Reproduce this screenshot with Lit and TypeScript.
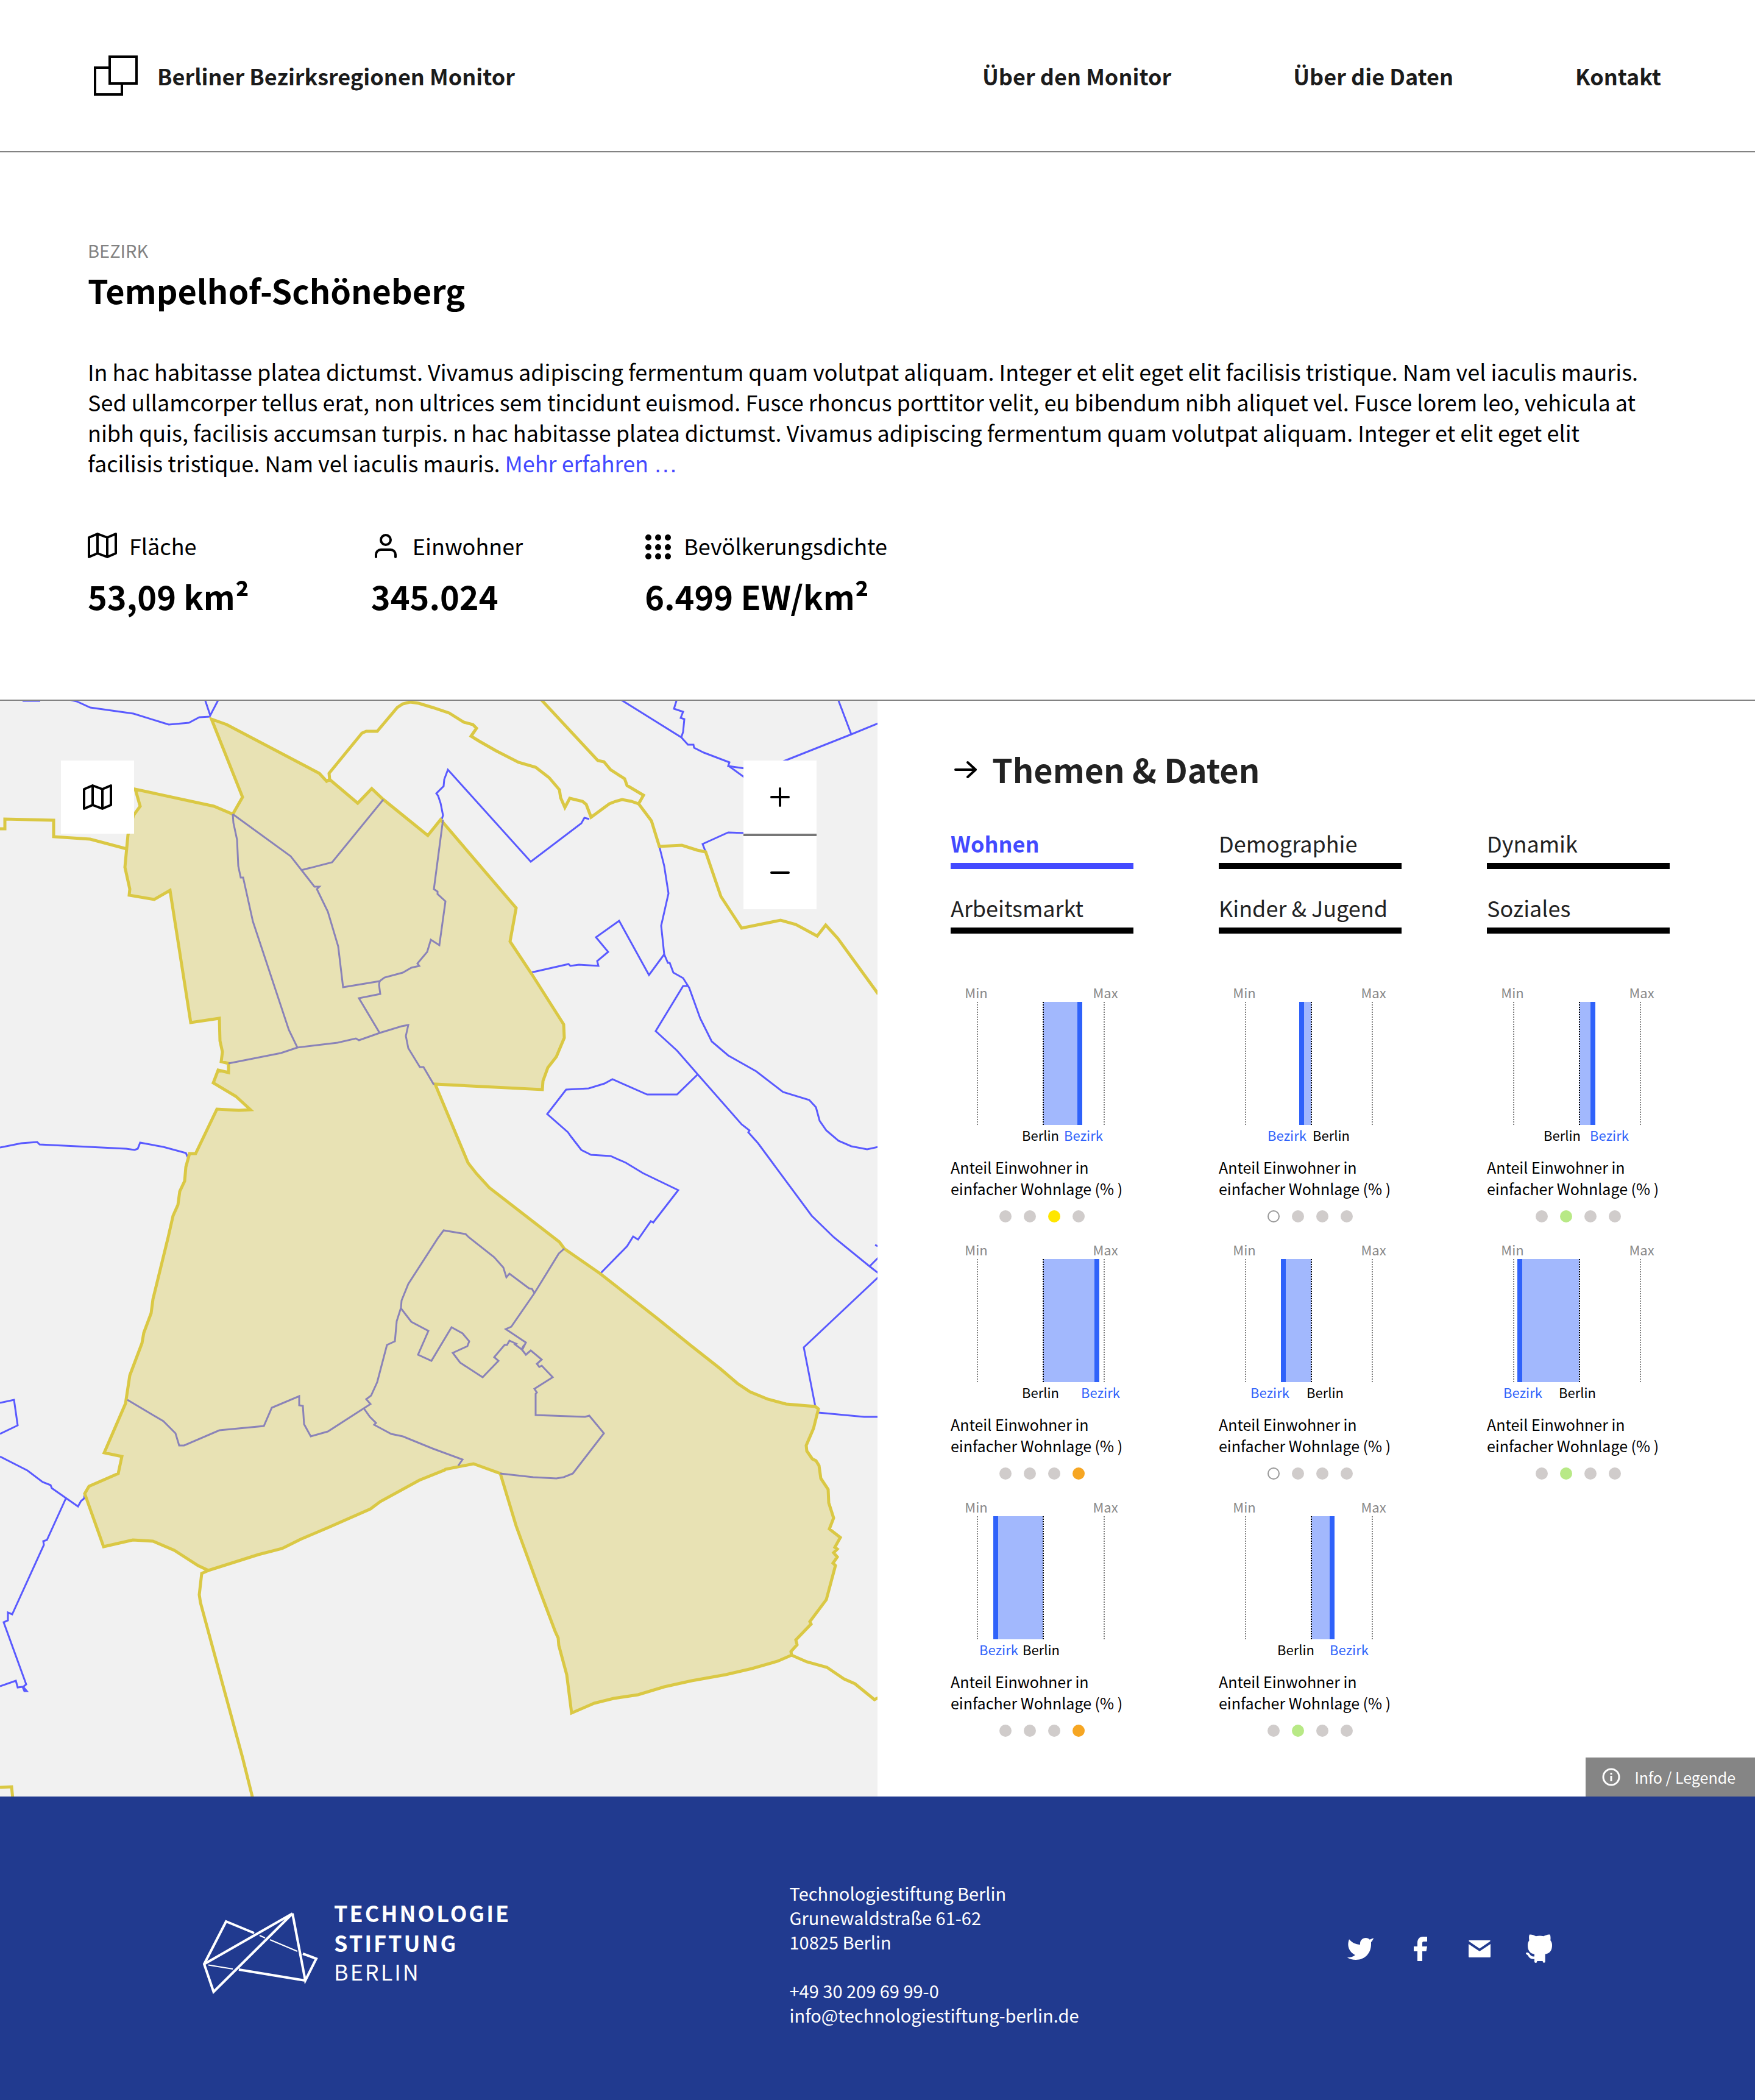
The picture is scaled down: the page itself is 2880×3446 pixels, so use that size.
import { LitElement, html, css, svg } from "lit";
import { customElement, property, state } from "lit/decorators.js";
import { classMap } from "lit/directives/class-map.js";

/* ---------- map geometry ---------- */

// The district borders were digitised on four sheets; each sheet has its own
// origin and resolution and is projected onto one shared drawing plane.
type Sheet = "nw" | "ne" | "sw" | "se";
const SHEETS: Record<Sheet, { x: number; y: number; sx: number; sy: number }> = {
  nw: { x: 0, y: -10, sx: 2.148, sy: 1.742 },
  ne: { x: 710, y: -10, sx: 2.119, sy: 1.742 },
  sw: { x: 0, y: 880, sx: 2.148, sy: 1.686 },
  se: { x: 710, y: 880, sx: 2.119, sy: 1.686 },
};

const project = (sheet: Sheet, points: string): string =>
  points
    .split(" ")
    .map((pair) => {
      const [x, y] = pair.split(",").map(Number);
      const s = SHEETS[sheet];
      return `${Math.round(s.x + x / s.sx)},${Math.round(s.y + y / s.sy)}`;
    })
    .join(" ");

const line = (...parts: [Sheet, string][]): string =>
  parts.map(([sheet, points]) => project(sheet, points)).join(" ");

const DISTRICT = line(
  ["nw", "745,70 800,86 1125,224 1152,248 1162,243 1260,310 1310,268 1350,298 1508,402 1552,357"],
  ["ne", "290,610 270,705 345,800 455,942 458,980 430,1035 400,1066 384,1104 382,1128 8,1114 122,1338 130,1344 152,1370 198,1410 440,1564"],
  ["se", "458,32 582,102 780,225 900,302 1000,364 1060,404 1105,428 1165,448 1230,462 1330,468 1342,476 1325,530 1298,577 1302,592 1320,614 1332,619 1343,632 1349,667 1376,698 1378,735 1394,778 1380,808 1418,831 1398,858 1406,864 1394,873 1406,885 1392,902 1400,909 1368,1004 1312,1064 1316,1071 1262,1114 1268,1128 1245,1146 1248,1157 1200,1173 1110,1193 1020,1210 900,1228 805,1245 715,1267 630,1276 562,1290 484,1316 466,1210 438,1130 437,1110 425,1090 370,975 290,800 236,655 142,627 45,643"],
  ["sw", "1568,644 1478,672 1340,732 1305,752 1160,803 1060,837 995,861 910,879 735,922 698,908 615,866 540,841 468,838 365,856 299,710 314,690 416,655 430,607 367,597 442,460 457,382 501,294 507,265 532,211 539,172 593,0"],
  ["nw", "610,1490 628,1458 634,1420 650,1390 655,1350 668,1312 690,1312 765,1184 842,1188 882,1186 832,1148 752,1109 768,1073 806,1080 806,1054 780,1048 785,1020 775,990 773,925 672,937 600,559 543,586 455,573 457,555 441,493 452,400 470,345 494,318 476,270 755,318 820,342 855,292"]
);

const DISTRICT_LINES: string[] = [
  line(["nw", "0,384 18,384 18,355 190,358 190,406 318,412 446,441"]),
  line(
    ["nw", "1162,243 1160,225 1275,110 1290,104 1330,104 1400,36 1420,26 1445,21 1475,24 1525,36"],
    ["ne", "57,52 108,78 140,86 153,96 134,118 160,132 220,160 298,194 358,208 405,237 440,271 446,295 460,322 476,297 522,304 534,314 550,350 615,312 635,304 660,300 690,305 716,312 733,288 675,260 668,241 618,214 595,192 575,189 378,14"]
  ),
  line(["ne", "716,312 760,360 788,434 866,430 920,445 950,450 1002,576 1075,667 1210,645 1262,656 1338,690 1366,659 1410,697 1550,855"]),
  line(["sw", "735,922 711,931 702,990 706,1012 855,1440 892,1554"]),
  line(["sw", "0,1523 41,1520 45,1554"]),
  line(["se", "1248,1157 1302,1175 1370,1190 1430,1222 1468,1235 1536,1279 1550,1274"]),
];

const REGION_LINES: string[] = [
  line(["nw", "80,18 142,18"]),
  line(["nw", "235,12 270,20 318,36 470,54 595,85 665,80 702,65 742,63"]),
  line(["nw", "722,12 742,60 772,12"]),
  line(["nw", "0,1295 75,1282 132,1279 140,1286 445,1297 475,1301 486,1298 495,1281 575,1292 655,1310 661,1322"]),
  line(["ne", "32,356 36,345 28,310 20,290 12,283 38,262 40,242 53,214 341,478 518,367 527,352 545,355"]),
  line(["ne", "788,434 806,490 819,568 795,660 805,742 752,801 648,646 568,694 611,735 572,762 576,776 508,771 478,776 472,770 341,794"]),
  line(["ne", "805,742 818,766 824,766 838,794 870,810 892,838 930,925 970,991 1028,1031 1125,1077 1218,1135 1310,1158 1332,1180 1345,1218 1368,1246 1412,1275 1455,1290 1510,1299 1550,1292"]),
  line(
    ["ne", "887,833 870,833 775,962 850,1018 921,1086 1075,1228 1102,1245 1097,1250 1132,1282 1318,1489"],
    ["se", "1394,0 1520,81 1550,100"]
  ),
  line(["se", "1520,81 1550,58"]),
  line(["se", "1538,22 1550,25"]),
  line(
    ["ne", "921,1086 850,1142 745,1142 625,1099 598,1112 542,1125 465,1128 398,1198 470,1250 480,1263 518,1301 550,1315 618,1319 672,1337 730,1368 854,1417 768,1508 759,1505 715,1558 698,1549"],
    ["se", "675,25 582,102"]
  ),
  line(["ne", "650,12 864,122 888,143 907,142 908,151 942,165 1032,193 1028,203 1100,213"]),
  line(["ne", "1030,203 1100,245"]),
  line(["ne", "864,122 870,106 875,70 862,66 870,48 840,40 850,12"]),
  line(["ne", "1410,12 1455,113"]),
  line(["ne", "1200,196 1455,113 1550,82"]),
  line(["ne", "950,450 938,427 1028,394 1150,398"]),
  line(["sw", "0,458 49,450 62,521 0,545"]),
  line(["sw", "0,607 97,645 150,678 178,687 182,694 275,745 285,730 297,723 299,710"]),
  line(["sw", "232,723 165,838 153,842 154,852 42,1044 28,1038 28,1060 12,1065 92,1238 82,1244 95,1256 86,1256 80,1244 63,1246 56,1227 0,1242"]),
  line(["se", "1550,112 1290,306 1330,468"]),
  line(["se", "1342,485 1500,497 1550,498"]),
];

const INNER_LINES: string[] = [
  line(
    ["nw", "820,342 1025,462 1108,549 1126,548 1118,556 1155,620 1192,720 1209,837 1338,818 1355,808 1420,794 1450,780 1478,775 1472,768 1505,735 1518,701 1548,716"],
    ["ne", "44,590 18,570 18,562 5,555 36,357"]
  ),
  line(["nw", "820,342 822,365 835,415 840,490 848,523 858,523 892,648 1018,958 1048,1009 1190,995 1255,983 1265,987 1338,966 1415,947 1440,945 1431,975 1440,1010 1480,1065 1493,1064 1530,1115"]),
  line(["nw", "805,1054 990,1025 1048,1009"]),
  line(["nw", "1338,966 1265,867 1341,856 1336,830 1338,818"]),
  line(["nw", "1062,501 1170,479 1352,300"]),
  line(
    ["sw", "449,451 575,509 618,543 632,576 648,577 773,535 930,522 957,472 1054,440 1055,466 1067,467 1072,517 1096,552 1155,538 1283,474 1306,462 1292,448 1308,438 1330,402 1363,298 1391,288 1398,232 1414,195 1416,176 1440,130 1545,2"],
    ["ne", "38,1532 115,1542"],
    ["se", "125,0 215,55 245,85 256,111 268,101 335,142 345,144 354,155"]
  ),
  line(
    ["sw", "1283,474 1303,498 1325,515 1318,520 1380,545 1420,552"],
    ["se", "0,585 103,616 90,632"]
  ),
  line(
    ["sw", "1414,198 1450,234 1511,260 1474,325 1521,342"],
    ["se", "65,249 103,266 127,289 121,301 70,321 95,348 174,388 228,342 213,332 250,299 258,299 268,287 291,295 286,297 312,312 325,292 254,255 273,248 354,155 438,46 458,32"]
  ),
  line(["se", "318,298 310,310 325,325 341,314 379,339 362,350 371,359 380,355 417,388 353,420 362,430 358,433 358,492 530,498 545,494 596,543 488,655 455,665 430,667 350,664 236,655"]),
];

/* ---------- icons ---------- */

const mapIcon = html`<svg class="icon" viewBox="0 0 48 48" aria-hidden="true">
  <path class="stroke" d="M2 11 16 5 32 11 46 5V37L32 43 16 37 2 43ZM16 5V37M32 11V43" />
</svg>`;

const personIcon = html`<svg class="icon" viewBox="0 0 48 48" aria-hidden="true">
  <circle class="stroke" cx="24" cy="15" r="8" />
  <path class="stroke" d="M8 43V39A8 8 0 0 1 16 31H32A8 8 0 0 1 40 39V43" />
</svg>`;

const gridIcon = html`<svg class="icon narrow" viewBox="0 0 44 48" aria-hidden="true">
  ${[11, 27, 42].map((y) => [6, 22, 38].map((x) => svg`<circle cx=${x} cy=${y} r="5" />`))}
</svg>`;

/* ---------- data ---------- */

interface Indicator {
  bezirk: number;
  bezirkLabel: number;
  berlinLabel: number;
  rating: number;
}

const BERLIN = 152;
const RATINGS = ["none", "green", "yellow", "orange"];

const INDICATORS: Indicator[] = [
  { bezirk: 212, berlinLabel: 117, bezirkLabel: 186, rating: 2 },
  { bezirk: 136, berlinLabel: 154, bezirkLabel: 80, rating: 0 },
  { bezirk: 174, berlinLabel: 93, bezirkLabel: 169, rating: 1 },
  { bezirk: 240, berlinLabel: 117, bezirkLabel: 214, rating: 3 },
  { bezirk: 106, berlinLabel: 144, bezirkLabel: 52, rating: 0 },
  { bezirk: 54, berlinLabel: 118, bezirkLabel: 27, rating: 1 },
  { bezirk: 74, berlinLabel: 118, bezirkLabel: 47, rating: 3 },
  { bezirk: 186, berlinLabel: 96, bezirkLabel: 182, rating: 1 },
];

const TOPICS = ["Wohnen", "Demographie", "Dynamik", "Arbeitsmarkt", "Kinder & Jugend", "Soziales"];

/* ---------- elements ---------- */

@customElement("indicator-card")
class IndicatorCard extends LitElement {
  @property({ attribute: false }) data!: Indicator;

  static styles = css`
    :host {
      display: block;
    }
    .chart {
      display: block;
      width: 300px;
      height: 264px;
      overflow: visible;
      font-size: 22px;
    }
    .limit {
      stroke: #808080;
      stroke-width: 2;
      stroke-dasharray: 2 2;
    }
    .mean {
      stroke: #000;
      stroke-width: 2;
      stroke-dasharray: 2 2;
    }
    .range {
      fill: #a2b8fd;
    }
    .value {
      fill: #2f62fa;
    }
    .muted {
      fill: #888;
      text-anchor: middle;
    }
    .caption {
      margin: 18px 0;
      font-size: 25px;
      line-height: 35px;
      color: #000;
    }
    .dots {
      display: flex;
      justify-content: center;
      gap: 20px;
      width: 300px;
      margin: 0;
      padding: 0;
      list-style: none;
    }
    .dot {
      box-sizing: border-box;
      width: 20px;
      height: 20px;
      border-radius: 50%;
      background: #d0cccb;
    }
    .none {
      background: #fff;
      border: 2px solid #999;
    }
    .green {
      background: #b8e986;
    }
    .yellow {
      background: #ffe600;
    }
    .orange {
      background: #f6a623;
    }
  `;

  render() {
    const { bezirk, bezirkLabel, berlinLabel, rating } = this.data;
    return html`
      <svg class="chart" viewBox="0 0 300 264">
        <text class="muted" x="42" y="22">Min</text>
        <text class="muted" x="254" y="22">Max</text>
        <line class="limit" x1="44" x2="44" y1="28" y2="230" />
        <line class="limit" x1="252" x2="252" y1="28" y2="230" />
        <rect class="range" x=${Math.min(bezirk, BERLIN)} y="28" width=${Math.abs(bezirk - BERLIN)} height="202" />
        <line class="mean" x1=${BERLIN} x2=${BERLIN} y1="28" y2="230" />
        <rect class="value" x=${bezirk - 4} y="28" width="8" height="202" />
        <text x=${berlinLabel} y="256">Berlin</text>
        <text class="value" x=${bezirkLabel} y="256">Bezirk</text>
      </svg>
      <p class="caption">Anteil Einwohner in<br />einfacher Wohnlage (% )</p>
      <ul class="dots">
        ${RATINGS.map((name, i) => html`<li class=${classMap({ dot: true, [name]: i === rating })}></li>`)}
      </ul>
    `;
  }
}

@customElement("district-map")
class DistrictMap extends LitElement {
  static styles = css`
    :host {
      display: block;
      position: relative;
      background: #f1f1f1;
    }
    .map {
      display: block;
      width: 100%;
      height: auto;
    }
    .map polyline,
    .map polygon {
      fill: none;
      stroke-linejoin: miter;
    }
    .map .area {
      fill: #e8e2b4;
      stroke: #dac844;
      stroke-width: 5;
    }
    .map .district {
      stroke: #dac844;
      stroke-width: 5;
    }
    .map .region {
      stroke: #5a5aff;
      stroke-width: 3;
    }
    .map .inner {
      stroke: #8a83b8;
      stroke-width: 3;
    }
    .button {
      display: flex;
      align-items: center;
      justify-content: center;
      width: 120px;
      height: 120px;
      padding: 0;
      border: 0;
      background: #fff;
      cursor: pointer;
    }
    .layers {
      position: absolute;
      top: 98px;
      left: 100px;
    }
    .zoom {
      position: absolute;
      top: 98px;
      right: 100px;
      display: flex;
      flex-direction: column;
      gap: 4px;
      background: #777;
    }
    .icon {
      width: 48px;
      height: 48px;
    }
    .stroke {
      fill: none;
      stroke: #000;
      stroke-width: 4;
      stroke-linecap: round;
      stroke-linejoin: round;
    }
  `;

  render() {
    return html`
      <svg class="map" viewBox="0 0 1440 1798" role="img" aria-label="Karte Tempelhof-Schöneberg">
        ${REGION_LINES.map((p) => svg`<polyline class="region" points=${p} />`)}
        <polygon class="area" points=${DISTRICT} />
        ${INNER_LINES.map((p) => svg`<polyline class="inner" points=${p} />`)}
        ${DISTRICT_LINES.map((p) => svg`<polyline class="district" points=${p} />`)}
      </svg>
      <button class="button layers" type="button" aria-label="Karte">${mapIcon}</button>
      <div class="zoom">
        <button class="button" type="button" aria-label="Vergrößern">
          <svg class="icon" viewBox="0 0 48 48"><path class="stroke" d="M10 24H38M24 10V38" /></svg>
        </button>
        <button class="button" type="button" aria-label="Verkleinern">
          <svg class="icon" viewBox="0 0 48 48"><path class="stroke" d="M10 24H38" /></svg>
        </button>
      </div>
    `;
  }
}

@customElement("app-root")
class AppRoot extends LitElement {
  @state() private topic = "Wohnen";

  static styles = css`
    :host {
      display: block;
      background: #fff;
      color: #000;
      font-family: "Noto Sans CJK SC", sans-serif;
      font-size: 36px;
      line-height: 50px;
    }
    a {
      color: inherit;
      text-decoration: none;
    }
    h1,
    h2,
    p,
    dl,
    dd {
      margin: 0;
    }
    .stroke {
      fill: none;
      stroke: #000;
      stroke-width: 4;
      stroke-linecap: round;
      stroke-linejoin: round;
    }
    .icon {
      flex: none;
      width: 48px;
      height: 48px;
    }
    .narrow {
      width: 44px;
    }

    .header {
      display: flex;
      align-items: center;
      justify-content: space-between;
      height: 248px;
      padding: 0 154px;
      border-bottom: 2px solid #828282;
      color: #1b1b1b;
      font-weight: 700;
    }
    .brand {
      display: flex;
      align-items: center;
      gap: 30px;
    }
    .brand-mark {
      width: 74px;
      height: 66px;
    }
    .nav {
      display: flex;
      gap: 200px;
    }

    .intro {
      padding: 140px 144px 134px;
      border-bottom: 2px solid #828282;
    }
    .kicker {
      font-size: 29px;
      line-height: 40px;
      color: #828282;
    }
    .title {
      margin: 10px 0 72px;
      font-size: 54px;
      line-height: 72px;
      font-weight: 700;
    }
    .lead {
      padding-right: 32px;
    }
    .more {
      color: #434aff;
    }
    .ellipsis {
      font-family: "Liberation Sans", sans-serif;
      font-size: 40px;
      line-height: 1;
    }
    .facts {
      display: flex;
      gap: 200px;
      margin-top: 86px;
    }
    .fact-label {
      display: flex;
      align-items: center;
      gap: 20px;
    }
    .fact-value {
      margin-top: 22px;
      font-size: 54px;
      line-height: 72px;
      font-weight: 700;
    }

    .main {
      display: grid;
      grid-template-columns: 1fr 1fr;
    }
    .panel {
      display: flex;
      flex-direction: column;
      padding-top: 76px;
    }
    .panel-title {
      display: flex;
      align-items: center;
      gap: 20px;
      padding: 0 120px;
      font-size: 54px;
      line-height: 72px;
      font-weight: 700;
      color: #222;
    }
    .tabs,
    .charts {
      display: grid;
      grid-template-columns: repeat(3, 1fr);
      column-gap: 140px;
      padding: 0 140px 0 120px;
    }
    .tabs {
      row-gap: 38px;
      margin-top: 60px;
    }
    .tab {
      padding: 0 0 8px;
      border: 0;
      border-bottom: 10px solid #000;
      background: none;
      font: inherit;
      color: #222;
      text-align: left;
      white-space: nowrap;
      cursor: pointer;
    }
    .active {
      border-color: #434aff;
      color: #434aff;
      font-weight: 700;
    }
    .charts {
      row-gap: 32px;
      margin-top: 84px;
    }
    .legend {
      display: flex;
      align-items: center;
      align-self: flex-end;
      gap: 22px;
      height: 64px;
      margin-top: auto;
      padding: 0 32px 0 26px;
      border: 0;
      background: #858585;
      color: #fff;
      font: inherit;
      font-size: 25px;
      line-height: 35px;
      cursor: pointer;
    }
    .legend-icon {
      width: 32px;
      height: 32px;
    }
    .legend-icon circle,
    .legend-icon path {
      fill: none;
      stroke: #fff;
      stroke-width: 3;
    }

    .footer {
      display: flex;
      align-items: center;
      justify-content: space-between;
      padding: 138px 330px 120px;
      background: #213a8f;
      color: #fff;
      font-size: 29px;
      line-height: 40px;
    }
    .logo {
      width: 528px;
      height: 160px;
      overflow: visible;
      fill: #fff;
      font-size: 36px;
      font-weight: 700;
      letter-spacing: 3px;
    }
    .logo .light {
      font-weight: 400;
    }
    .logo .edge {
      fill: none;
      stroke: #fff;
      stroke-width: 4;
    }
    .logo .hair {
      fill: none;
      stroke: #fff;
      stroke-width: 2;
    }
    .address {
      font-style: normal;
    }
    .address p + p {
      margin-top: 40px;
    }
    .social {
      display: flex;
      gap: 50px;
      padding-bottom: 16px;
    }
    .social a {
      display: flex;
    }
    .social svg {
      fill: #fff;
    }
  `;

  render() {
    return html`
      <header class="header">
        <a class="brand" href="#">
          <svg class="brand-mark" viewBox="0 0 74 66" aria-hidden="true">
            <path d="M26 20H2V64H46V46M26 2H70V46H26Z" fill="none" stroke="#000" stroke-width="4" />
          </svg>
          <span>Berliner Bezirksregionen Monitor</span>
        </a>
        <nav class="nav">
          <a href="#monitor">Über den Monitor</a>
          <a href="#daten">Über die Daten</a>
          <a href="#kontakt">Kontakt</a>
        </nav>
      </header>

      <section class="intro">
        <p class="kicker">BEZIRK</p>
        <h1 class="title">Tempelhof-Schöneberg</h1>
        <p class="lead">
          In hac habitasse platea dictumst. Vivamus adipiscing fermentum quam volutpat aliquam. Integer et elit eget
          elit facilisis tristique. Nam vel iaculis mauris. Sed ullamcorper tellus erat, non ultrices sem tincidunt
          euismod. Fusce rhoncus porttitor velit, eu bibendum nibh aliquet vel. Fusce lorem leo, vehicula at nibh quis,
          facilisis accumsan turpis. n hac habitasse platea dictumst. Vivamus adipiscing fermentum quam volutpat
          aliquam. Integer et elit eget elit facilisis tristique. Nam vel iaculis mauris.
          <a class="more" href="#mehr">Mehr erfahren <span class="ellipsis">…</span></a>
        </p>
        <dl class="facts">
          <div>
            <dt class="fact-label">${mapIcon} Fläche</dt>
            <dd class="fact-value">53,09 km²</dd>
          </div>
          <div>
            <dt class="fact-label">${personIcon} Einwohner</dt>
            <dd class="fact-value">345.024</dd>
          </div>
          <div>
            <dt class="fact-label">${gridIcon} Bevölkerungsdichte</dt>
            <dd class="fact-value">6.499 EW/km²</dd>
          </div>
        </dl>
      </section>

      <main class="main">
        <district-map></district-map>
        <section class="panel">
          <h2 class="panel-title">
            <svg class="icon" viewBox="0 0 48 48" aria-hidden="true">
              <path class="stroke" d="M8 25H41M28 13 41 25 28 37" />
            </svg>
            Themen &amp; Daten
          </h2>
          <div class="tabs" role="tablist">
            ${TOPICS.map(
              (name) => html`<button
                class=${classMap({ tab: true, active: name === this.topic })}
                type="button"
                role="tab"
                aria-selected=${name === this.topic}
                @click=${() => (this.topic = name)}
              >${name}</button>`
            )}
          </div>
          <div class="charts">
            ${INDICATORS.map((item) => html`<indicator-card .data=${item}></indicator-card>`)}
          </div>
          <button class="legend" type="button">
            <svg class="legend-icon" viewBox="0 0 32 32" aria-hidden="true">
              <circle cx="16" cy="16" r="13" />
              <path d="M16 14V23M16 9V12" />
            </svg>
            Info / Legende
          </button>
        </section>
      </main>

      <footer class="footer">
        <svg class="logo" viewBox="0 0 528 160" role="img" aria-label="Technologiestiftung Berlin">
          <path
            class="edge"
            d="M87 46 41 27 5 97 20.500 142.500 150 14 5 97M150 14 171 124 189 88 167 80M62 106 171 124"
          />
          <path class="hair" d="M96 50 105 54M113 57 158 76M12 98.500 52 105" />
          <text x="218" y="28">TECHNOLOGIE</text>
          <text x="218" y="77">STIFTUNG</text>
          <text class="light" x="218" y="124">BERLIN</text>
        </svg>
        <address class="address">
          <p>Technologiestiftung Berlin<br />Grunewaldstraße 61-62<br />10825 Berlin</p>
          <p>
            <a href="tel:+493020969990">+49 30 209 69 99-0</a><br />
            <a href="mailto:info@technologiestiftung-berlin.de">info@technologiestiftung-berlin.de</a>
          </p>
        </address>
        <div class="social">
          <a href="#twitter" aria-label="Twitter">
            <svg class="icon" viewBox="0 0 48 48">
              <path
                d="M6 8.300C11 14 17 17 24 16.900V15C24 10 28 6 33.300 6C36 6 38 7 39.700 8.800L46 6.300C45.300 9 44 11 42 13V16C42 31 32 42 17 42C11.500 42 6.500 40.700 2.700 38.300C8 38.300 12.500 37 16 34C7 30 1.500 20 6 8.300Z"
              />
            </svg>
          </a>
          <a href="#facebook" aria-label="Facebook">
            <svg class="icon" viewBox="0 0 48 48">
              <path d="M36 4V12H31C29 12 28 12.500 28 14.500V20H36L34.500 28H28V44H20V28H14V20H20V14C20 8 23.500 4 29 4Z" />
            </svg>
          </a>
          <a href="#mail" aria-label="E-Mail">
            <svg class="icon" viewBox="0 0 48 48">
              <path d="M6.500 10H41.500V11.500L24 23.500 6.500 11.500ZM6 16 24 28 42 16V36.500Q42 38 40.500 38H7.500Q6 38 6 36.500Z" />
            </svg>
          </a>
          <a href="#github" aria-label="GitHub">
            <svg class="icon" viewBox="0 0 48 48">
              <path
                d="M7.500 10C6.800 6 7 2.500 8 .5C11 0 15.500 1.500 18.500 3.200Q25 1.600 31 3.200C34 1.500 38.500 0 41.500 .5C42.700 3 42.700 7 42.300 10C44.300 12.500 45 15 45 18C45 27 41 31.500 33.700 32.700V44.500A2 2 0 0 1 29.700 45V44H20.300V45A2 2 0 0 1 16 44.500V40.500C9.500 41.500 7 38 5.500 35C4.500 33.500 2 33 2 31.500C2 29.500 5.500 29.500 7.500 31.500C9 34 11 37 16 36.500V32.700C9 31.500 5 27 5 18C5 15 5.800 12.500 7.500 10Z"
              />
            </svg>
          </a>
        </div>
      </footer>
    `;
  }
}
